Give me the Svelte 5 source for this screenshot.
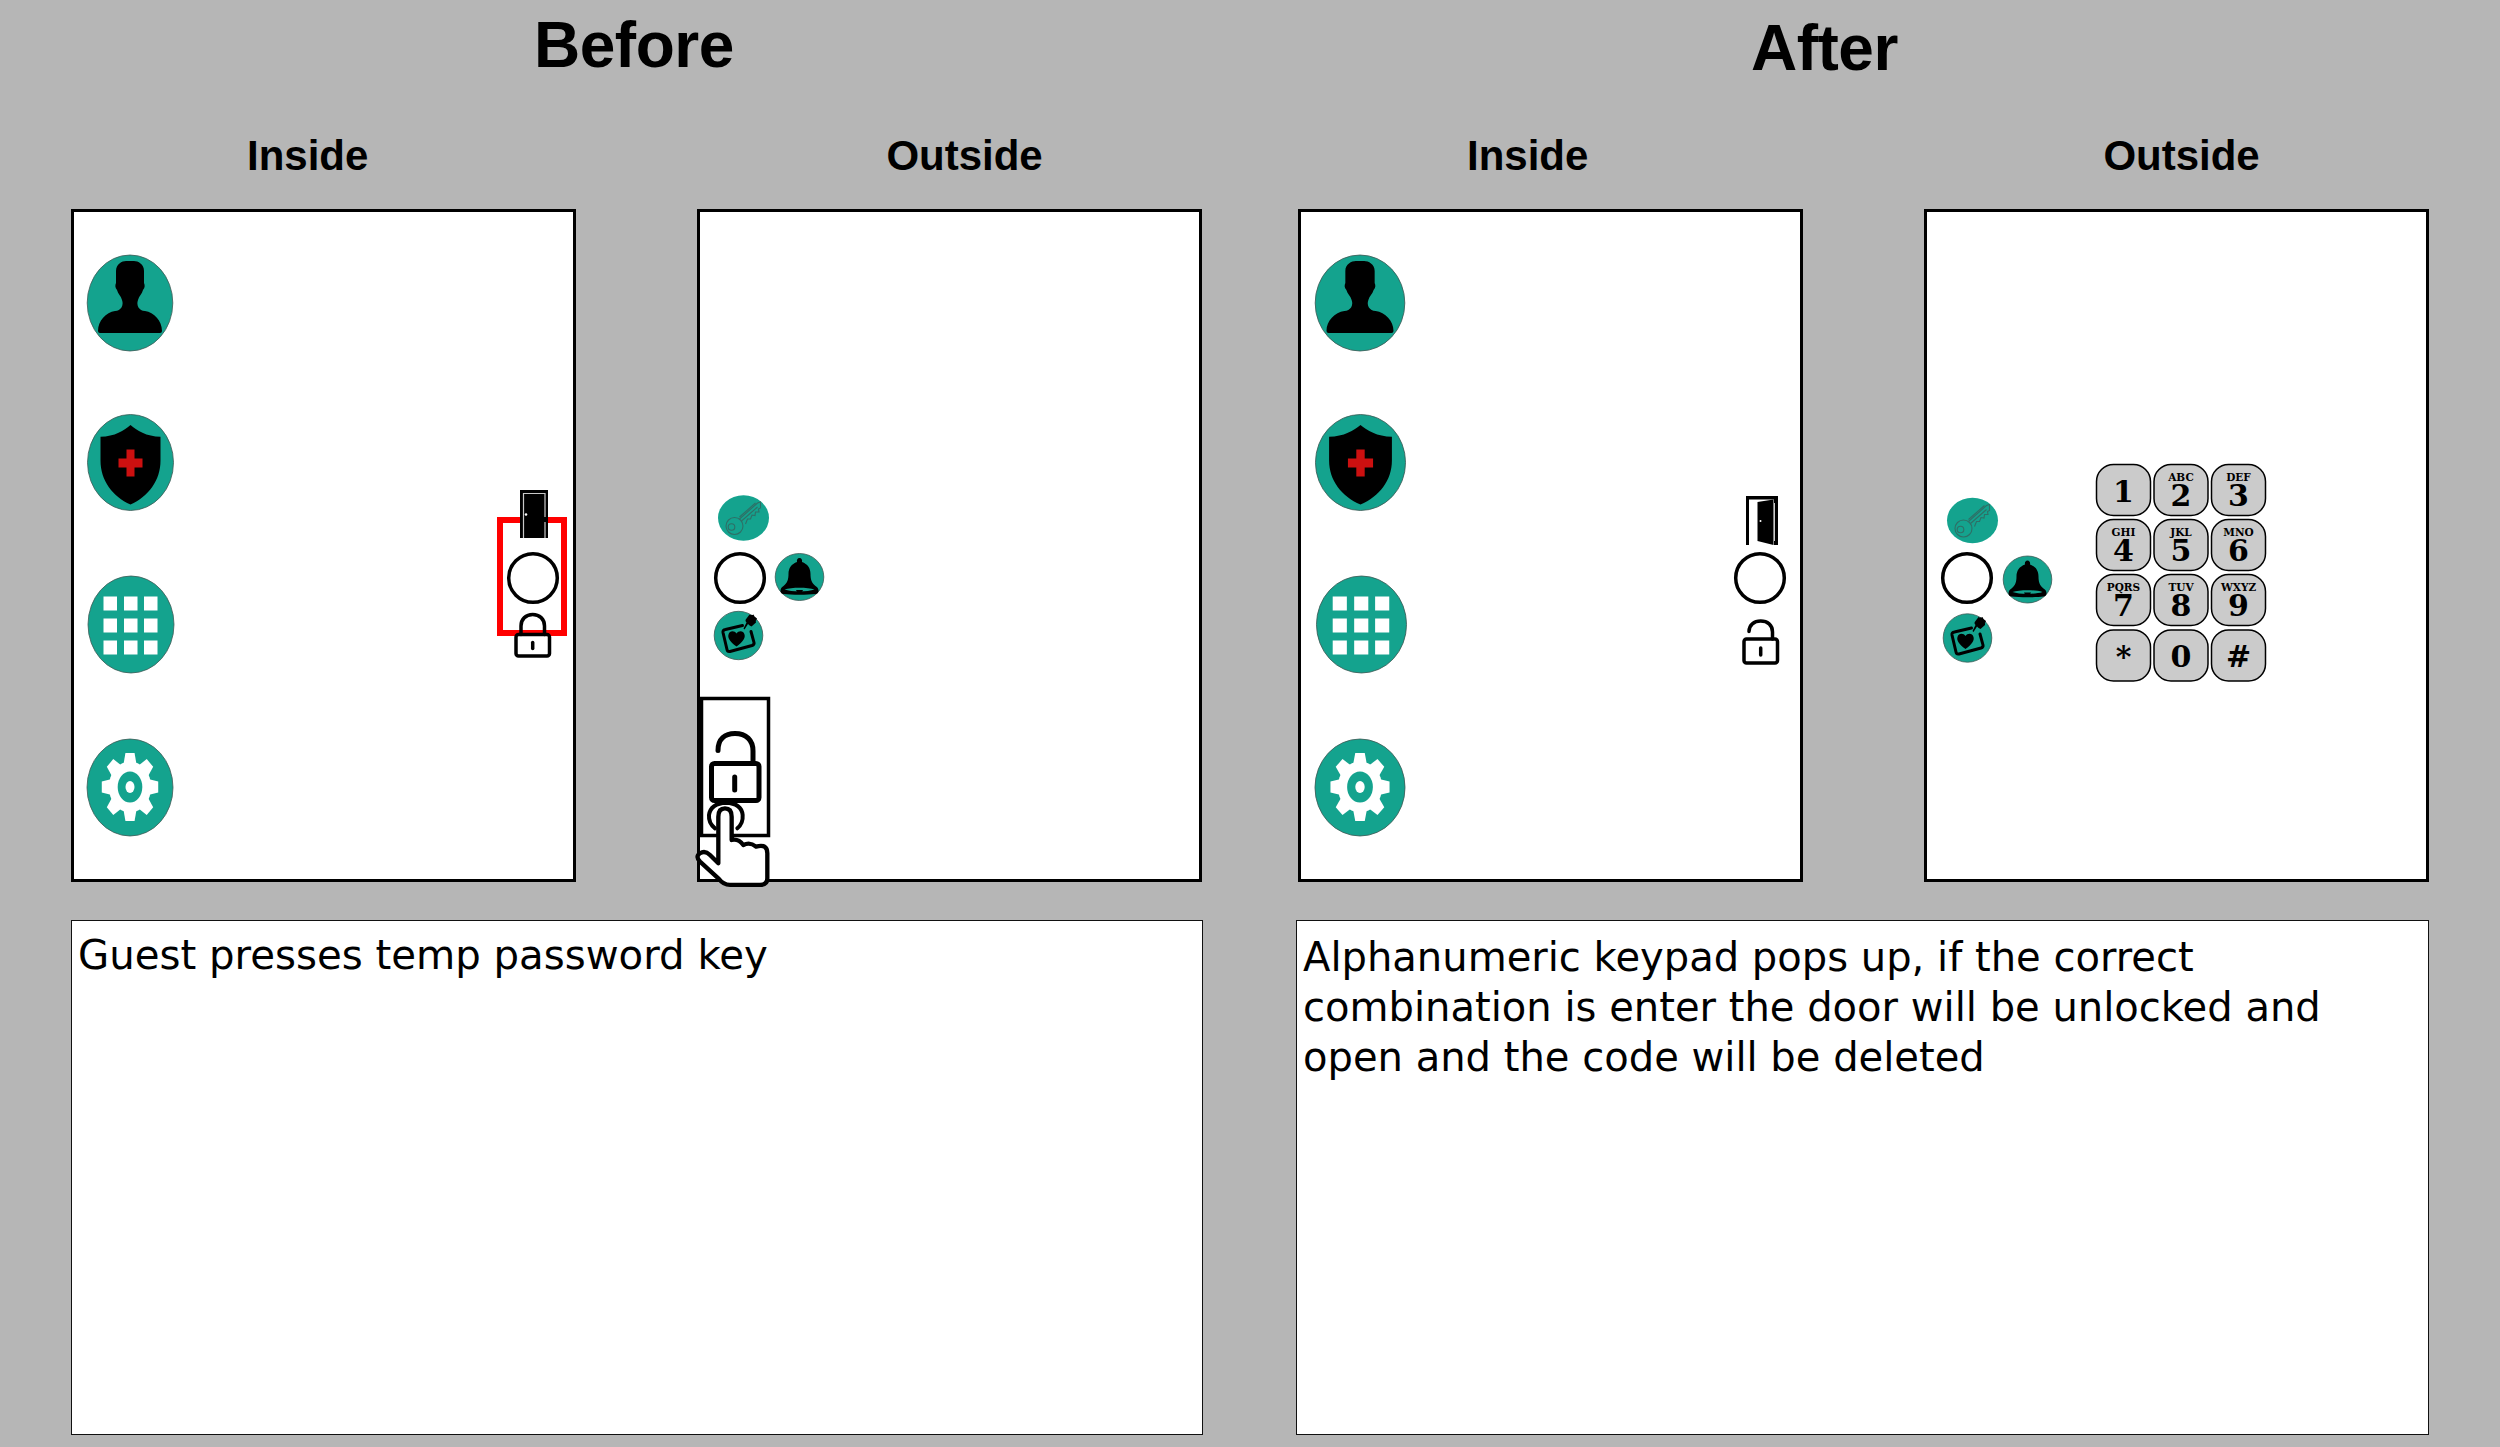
<script>
  const keyCols = [2123.5, 2181, 2238.5];
  const keyRows = [490, 545, 600, 655.5];
  const keyData = [
    ['1', ''], ['2', 'ABC'], ['3', 'DEF'],
    ['4', 'GHI'], ['5', 'JKL'], ['6', 'MNO'],
    ['7', 'PQRS'], ['8', 'TUV'], ['9', 'WXYZ'],
    ['*', ''], ['0', ''], ['#', '']
  ];
  const keys = keyData.map(([digit, letters], i) => ({
    digit,
    letters,
    x: keyCols[i % 3],
    y: keyRows[Math.floor(i / 3)]
  }));
  const gearTeeth = [0, 45, 90, 135, 180, 225, 270, 315];
  const gridCols = [-27.5, -7, 13];
  const gridRows = [-28, -6, 16];
  const beforeIcons = [
    { id: 'person', x: 130, y: 303, sx: 1 },
    { id: 'shield', x: 130.5, y: 462.5, sx: 1 },
    { id: 'grid', x: 131, y: 624.5, sx: 1 },
    { id: 'gear', x: 130, y: 787.5, sx: 1 }
  ];
  const afterIcons = [
    { id: 'person', x: 1360, y: 303, sx: 1.047 },
    { id: 'shield', x: 1360.5, y: 462.5, sx: 1.047 },
    { id: 'grid', x: 1361.5, y: 624.5, sx: 1.047 },
    { id: 'gear', x: 1360, y: 787.5, sx: 1.047 }
  ];
</script>

<svg class="defs" width="0" height="0" aria-hidden="true">
  <defs>
    <g id="person">
      <ellipse class="disc" rx="42.8" ry="48" />
      <path d="M-32 28C-32 18-24 9-15 8C-9 8-6 2-8-3C-9-7-12-9-13-13C-15-15-15-18-14-20L-14-32C-14-39-8-42-4-42L4-42C8-42 14-39 14-32L14-20C15-18 15-15 13-13C12-9 9-7 8-3C6 2 9 8 15 8C24 9 32 18 32 28Q32 30 30 30L-30 30Q-32 30-32 28Z" />
    </g>
    <g id="shield">
      <ellipse class="disc" rx="43" ry="48" />
      <path d="M0-37.5C6-32 16-26 30-25.7L30-2C30 18 18 34 0 42C-18 34-30 18-30-2L-30-25.7C-16-26-6-32 0-37.5Z" />
      <path class="cross" d="M-4-13H4V-4H12V5H4V14H-4V5H-12V-4H-4Z" />
    </g>
    <g id="grid">
      <ellipse class="disc" rx="43" ry="48.5" />
      {#each gridRows as gy}
        {#each gridCols as gx}
          <rect class="white" x={gx} y={gy} width="13.5" height="14" />
        {/each}
      {/each}
    </g>
    <g id="gear">
      <ellipse class="disc" rx="43" ry="48.5" />
      <g transform="translate(0 -0.5) scale(0.83 1)">
        <circle class="white" r="25.5" />
        {#each gearTeeth as angle}
          <path class="white" d="M-5.5-34H5.5L8-22H-8Z" transform="rotate({angle})" />
        {/each}
      </g>
      <ellipse class="disc-flat" rx="12.3" ry="15.5" cy="-0.5" />
      <ellipse class="white" rx="4.5" ry="6" cy="-0.5" />
    </g>
    <g id="lock-closed">
      <rect class="line" x="2" y="22" width="33.5" height="21.5" rx="2.5" />
      <path class="line" d="M7 22V13.5C7 6.5 12 2 18.7 2C25.5 2 30.5 6.5 30.5 13.5V22" />
      <path class="line" d="M18.7 30V36" />
    </g>
    <g id="lock-open">
      <rect class="line" x="2" y="20" width="33.5" height="24" rx="2.5" />
      <path class="line" d="M7 12.5C7 6 12 2 18.7 2C25.5 2 30.5 6 30.5 13V20" />
      <path class="line" d="M18.7 29V36" />
    </g>
    <g id="key">
      <ellipse class="disc-flat" rx="25.5" ry="22.7" />
      <g class="key-line">
        <circle cx="-9" cy="8" r="8.5" />
        <circle cx="-12" cy="9" r="3.3" />
        <path d="M-4 1L14-15L17-16L17-10L15-9L15.5-6L12-6L11.5-2.5L8.5-3L7 1L4 1L2 6" />
        <path d="M-2 3L14-11M-4 -1L12-15" />
      </g>
    </g>
    <g id="bell">
      <ellipse class="disc" rx="24.3" ry="23.5" />
      <path d="M0-19C2-19 3-17 2.5-15C8-13 11-9 11-3C11 2 12 6 16 9C20 11 20 17 16 17C8 18-8 18-16 17C-20 17-20 11-16 9C-12 6-11 2-11-3C-11-9-8-13-2.5-15C-3-17-2-19 0-19Z" />
      <path class="slit" d="M-15 12.5C-8 10 8 10 15 12.5C8 15-8 15-15 12.5Z" />
      <path d="M-3.5 13H3.5L2.5 15H-2.5Z" />
    </g>
    <g id="heart-card">
      <ellipse class="disc" rx="24.3" ry="24.2" />
      <path class="card" d="M4-10L-13-6Q-16-5.5-15.5-3L-11.5 14Q-11 16.5-8.5 16L13.5 10Q16 9 15.5 7L12.5-4" />
      <path d="M-2 11C-9 6-11 2-10-1C-9-5-4-5-2-2C0-5 5-5 6-1C7 2 5 6-2 11Z" />
      <path d="M5-7L8-13Q6-15 8-17L11-21Q13-20 15-21L16-19L18.5-17Q17-15 17.5-13L13-9Q11-10 9.5-11.5L6-6Z" />
    </g>
  </defs>
</svg>

<main class="page">
  <section class="panel before">
    <h1>Before</h1>
    <div class="labels">
      <h2>Inside</h2>
      <h2>Outside</h2>
    </div>
    <div class="screens">
      <div class="screen">
        <svg viewBox="74 212 499 667">
          {#each beforeIcons as icon}
            <use href="#{icon.id}" transform="translate({icon.x} {icon.y}) scale({icon.sx} 1)" />
          {/each}
          <rect class="highlight" x="500" y="520" width="64" height="113" />
          <rect x="520" y="490" width="28" height="48" />
          <path class="door-trim" d="M523.5 538V493.5H545V517M545 522V538" />
          <circle class="white" cx="526" cy="514.5" r="1.3" />
          <circle class="ring" cx="533" cy="578" r="24.3" />
          <use href="#lock-closed" x="514" y="612.5" />
        </svg>
      </div>
      <div class="screen">
        <svg viewBox="700 212 499 667">
          <use href="#key" x="743.5" y="518" />
          <circle class="ring" cx="740" cy="578" r="24.3" />
          <use href="#bell" x="799.5" y="577" />
          <use href="#heart-card" x="738.5" y="635.5" />
          <rect class="tap" x="701.5" y="698.5" width="67" height="137" />
          <g transform="translate(680 470) scale(0.3333)">
            <path class="tap-ripple" d="M105 1075Q85 1060 87 1035Q92 1000 138 998Q185 1000 188 1035Q190 1060 172 1075" />
            <path class="hand" d="M115 1180L115 1040Q115 1015 135 1015Q155 1015 155 1040L155 1110Q175 1105 190 1125Q210 1115 228 1130Q262 1120 262 1150L262 1225Q262 1245 240 1245L150 1245Q130 1245 115 1225L60 1175Q45 1160 60 1150Q75 1140 90 1155L115 1180Z" />
          </g>
          <g class="big-lock">
            <rect x="711.5" y="763.5" width="47.5" height="37" rx="3" />
            <path d="M718 750.5C718 739 725 733.5 735 733.5C746 733.5 753 740 753 751V763" />
            <path d="M734.7 777V790" />
          </g>
        </svg>
      </div>
    </div>
    <div class="note">Guest presses temp password key</div>
  </section>

  <section class="panel after">
    <h1>After</h1>
    <div class="labels">
      <h2>Inside</h2>
      <h2>Outside</h2>
    </div>
    <div class="screens">
      <div class="screen">
        <svg viewBox="1301 212 499 667">
          {#each afterIcons as icon}
            <use href="#{icon.id}" transform="translate({icon.x} {icon.y}) scale({icon.sx} 1)" />
          {/each}
          <path d="M1746 545V496H1778V545H1774V499.5H1749V545Z" />
          <path d="M1757.5 502L1773.5 499.5V545L1757.5 541Z" />
          <path class="door-glint" d="M1774.5 503V541" />
          <circle class="white" cx="1760.5" cy="521" r="1" />
          <circle class="ring" cx="1760" cy="578" r="24.3" />
          <use href="#lock-open" x="1742" y="619" />
        </svg>
      </div>
      <div class="screen">
        <svg viewBox="1927 212 499 667">
          <use href="#key" x="1972.5" y="520.5" />
          <circle class="ring" cx="1967" cy="578" r="24.3" />
          <use href="#bell" x="2027.5" y="579.5" />
          <use href="#heart-card" x="1967.5" y="638" />
          {#each keys as key}
            <g transform="translate({key.x} {key.y})">
              <rect class="key" x="-27" y="-25.5" width="54" height="51" rx="17" />
              {#if key.letters}
                <text class="key-letters" y="-9.5">{key.letters}</text>
                <text class="key-digit" y="15.5">{key.digit}</text>
              {:else}
                <text class="key-digit" y="11.5">{key.digit}</text>
              {/if}
            </g>
          {/each}
        </svg>
      </div>
    </div>
    <div class="note">Alphanumeric keypad pops up, if the correct combination is enter the door will be unlocked and open and the code will be deleted</div>
  </section>
</main>

<style>
  :global(body) {
    margin: 0;
    background: #b6b6b6;
  }
  .defs {
    display: block;
    height: 0;
  }
  .page {
    display: grid;
    grid-template-columns: 1131px 1133px;
    column-gap: 94px;
    width: 2500px;
    height: 1447px;
    padding-left: 71px;
    box-sizing: border-box;
    overflow: hidden;
    background: #b6b6b6;
    color: #000;
    font-family: "Liberation Sans", Arial, sans-serif;
  }
  .panel {
    display: flex;
    flex-direction: column;
  }
  h1 {
    margin: 0;
    height: 110px;
    box-sizing: border-box;
    font-size: 64px;
    font-weight: 700;
    line-height: 90px;
    letter-spacing: -0.5px;
  }
  .before h1 {
    padding: 0 0 0 463px;
  }
  .after h1 {
    padding: 3px 0 0 455px;
  }
  .labels {
    display: flex;
    height: 99px;
  }
  h2 {
    margin: 0;
    height: 70px;
    font-size: 42px;
    font-weight: 700;
    line-height: 92px;
  }
  .before h2:first-child {
    margin-left: 176px;
  }
  .before h2:last-child {
    margin-left: 518px;
  }
  .after h2:first-child {
    margin-left: 171px;
  }
  .after h2:last-child {
    margin-left: 515px;
  }
  .screens {
    display: flex;
    justify-content: space-between;
    height: 673px;
  }
  .after .screens {
    padding-left: 2px;
  }
  .screen {
    width: 505px;
    height: 673px;
    box-sizing: border-box;
    border: 3px solid #000;
    background: #fff;
  }
  .screen svg {
    display: block;
    width: 100%;
    height: 100%;
    overflow: visible;
  }
  .note {
    margin-top: 38px;
    height: 515px;
    box-sizing: border-box;
    border: 1.5px solid #111;
    background: #fff;
    padding: 0 6px;
    font-family: "DejaVu Sans", sans-serif;
    font-size: 40.25px;
    line-height: 50px;
  }
  .before .note {
    margin-right: -1px;
    padding-top: 9px;
  }
  .after .note {
    padding-top: 11px;
    font-size: 40.05px;
  }
  .disc {
    fill: #14a38e;
    stroke: #3d5a55;
    stroke-width: 0.8;
  }
  .disc-flat {
    fill: #14a38e;
  }
  .cross {
    fill: #cc1010;
  }
  .white {
    fill: #fff;
  }
  .line {
    fill: none;
    stroke: #000;
    stroke-width: 3.5;
    stroke-linecap: round;
    stroke-linejoin: round;
  }
  .ring {
    fill: #fff;
    stroke: #000;
    stroke-width: 3.5;
  }
  .highlight {
    fill: none;
    stroke: #ff0000;
    stroke-width: 6;
  }
  .door-trim {
    fill: none;
    stroke: #c8c8c8;
    stroke-width: 1.2;
  }
  .door-glint {
    fill: none;
    stroke: #fff;
    stroke-width: 0.8;
  }
  .key-line {
    fill: none;
    stroke: #2f6f66;
    stroke-width: 1.1;
  }
  .slit {
    fill: #14a38e;
  }
  .card {
    fill: none;
    stroke: #000;
    stroke-width: 3;
    stroke-linecap: round;
  }
  .tap {
    fill: none;
    stroke: #000;
    stroke-width: 3.5;
  }
  .tap-ripple {
    fill: none;
    stroke: #000;
    stroke-width: 12;
    stroke-linecap: round;
  }
  .hand {
    fill: #fff;
    stroke: #000;
    stroke-width: 13;
    stroke-linejoin: round;
  }
  .big-lock {
    fill: none;
    stroke: #000;
    stroke-width: 5;
    stroke-linecap: round;
    stroke-linejoin: round;
  }
  .key {
    fill: #cbcbcb;
    stroke: #000;
    stroke-width: 1.5;
  }
  .key-digit {
    font-family: "DejaVu Serif", serif;
    font-weight: 700;
    font-size: 30px;
    text-anchor: middle;
  }
  .key-letters {
    font-family: "DejaVu Serif", serif;
    font-weight: 700;
    font-size: 10.5px;
    text-anchor: middle;
  }
</style>
